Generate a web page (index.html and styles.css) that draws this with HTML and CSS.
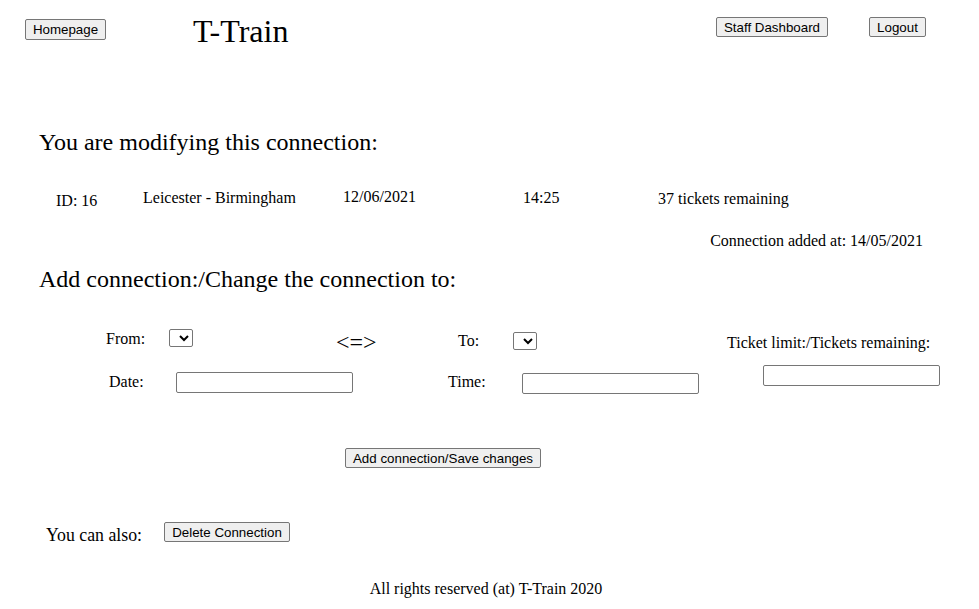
FILE: index.html
```html
<!DOCTYPE html>
<html>
<head>
<meta charset="utf-8">
<title>T-Train</title>
<link rel="stylesheet" href="styles.css">
</head>
<body>
<div class="page">
  <header class="header">
    <button class="btn btn-home">Homepage</button>
    <h1 class="title">T-Train</h1>
    <div class="spacer"></div>
    <button class="btn btn-staff">Staff Dashboard</button>
    <button class="btn btn-logout">Logout</button>
  </header>

  <h2 class="heading heading-first">You are modifying this connection:</h2>

  <div class="conn-row">
    <div class="cell c-id">ID: 16</div>
    <div class="cell c-route">Leicester - Birmingham</div>
    <div class="cell c-date">12/06/2021</div>
    <div class="cell c-time">14:25</div>
    <div class="cell c-tickets">37 tickets remaining</div>
  </div>

  <div class="added">Connection added at: 14/05/2021</div>

  <h2 class="heading heading-second">Add connection:/Change the connection to:</h2>

  <div class="form-row row-one">
    <div class="f f-from">From:</div>
    <div class="f f-fromsel"><select class="sel"></select></div>
    <div class="f f-arrow">&lt;=&gt;</div>
    <div class="f f-to">To:</div>
    <div class="f f-tosel"><select class="sel"></select></div>
    <div class="f f-limit">Ticket limit:/Tickets remaining:</div>
  </div>

  <div class="form-row row-two">
    <div class="f f-datel">Date:</div>
    <div class="f f-datei"><input class="inp" type="text"></div>
    <div class="f f-timel">Time:</div>
    <div class="f f-timei"><input class="inp" type="text"></div>
    <div class="f f-limiti"><input class="inp" type="text"></div>
  </div>

  <div class="save-row">
    <button class="btn btn-save">Add connection/Save changes</button>
  </div>

  <div class="also-row">
    <span class="also">You can also:</span>
    <button class="btn btn-delete">Delete Connection</button>
  </div>

  <footer class="footer">All rights reserved (at) T-Train 2020</footer>
</div>
</body>
</html>
```

FILE: styles.css
```css
html, body {
  margin: 0;
  padding: 0;
  background: #ffffff;
}

body {
  font-family: "Liberation Serif", "Times New Roman", serif;
  font-size: 16px;
  color: #000000;
  width: 979px;
  height: 609px;
  overflow: hidden;
}

.page {
  display: flex;
  flex-direction: column;
}

.btn {
  font-family: "Liberation Sans", Arial, sans-serif;
  font-size: 13.33px;
  line-height: 17px;
  height: 20px;
  padding: 1px 6px;
  margin: 0;
  border: 1px solid #767676;
  border-radius: 2px;
  background: #efefef;
  color: #000000;
  box-sizing: border-box;
}

.header {
  display: flex;
  align-items: flex-start;
  height: 60px;
}

.btn-home {
  margin: 19px 0 0 25px;
  width: 81px;
  height: 21px;
}

.title {
  margin: 13px 0 0 87px;
  font-size: 32px;
  line-height: 37px;
  font-weight: normal;
}

.spacer {
  flex: 1;
}

.btn-staff {
  margin-top: 17px;
  width: 112px;
}

.btn-logout {
  margin: 17px 53px 0 41px;
  width: 57px;
}

.heading {
  margin: 0;
  padding-left: 39px;
  font-size: 24px;
  line-height: 28px;
  font-weight: normal;
}

.heading-first {
  margin-top: 68px;
}

.conn-row {
  display: flex;
  align-items: flex-start;
  margin-top: 32px;
  padding-left: 56px;
  height: 20px;
}

.cell {
  line-height: 18px;
  white-space: nowrap;
}

.c-id {
  width: 87px;
  margin-top: 4px;
}

.c-route {
  width: 200px;
  margin-top: 1px;
}

.c-date {
  width: 180px;
  margin-top: 0;
}

.c-time {
  width: 135px;
  margin-top: 1px;
}

.c-tickets {
  margin-top: 2px;
}

.added {
  margin-top: 24px;
  text-align: right;
  padding-right: 56px;
  line-height: 18px;
}

.heading-second {
  margin-top: 15px;
}

.form-row {
  display: flex;
  align-items: flex-start;
  white-space: nowrap;
}

.row-one {
  margin-top: 36px;
  padding-left: 106px;
  height: 28px;
}

.f {
  line-height: 18px;
}

.f-from {
  width: 63px;
  margin-top: 1px;
}

.f-fromsel {
  width: 167px;
}

.sel {
  width: 24px;
  height: 18px;
  margin: 0;
  padding: 0;
  border: 1px solid #767676;
  border-radius: 2px;
  background: #ffffff;
  box-sizing: border-box;
  display: block;
}

.f-arrow {
  width: 122px;
  font-size: 24px;
  line-height: 24px;
  margin-top: 1px;
}

.f-to {
  width: 55px;
  margin-top: 3px;
}

.f-tosel {
  width: 214px;
  margin-top: 3px;
}

.f-limit {
  margin-top: 5px;
}

.row-two {
  margin-top: 8px;
  padding-left: 109px;
  height: 30px;
}

.inp {
  width: 177px;
  height: 21px;
  margin: 0;
  padding: 1px 2px;
  border: 1px solid #767676;
  border-radius: 2px;
  box-sizing: border-box;
  display: block;
  font-family: "Liberation Sans", Arial, sans-serif;
  font-size: 13px;
}

.f-datel {
  width: 67px;
  margin-top: 8px;
}

.f-datei {
  width: 272px;
  margin-top: 7px;
}

.f-timel {
  width: 74px;
  margin-top: 8px;
}

.f-timei {
  width: 241px;
  margin-top: 8px;
}

.f-limiti {
  margin-top: 0;
}

.save-row {
  margin-top: 53px;
  padding-left: 345px;
  display: flex;
}

.btn-save {
  width: 196px;
}

.also-row {
  margin-top: 54px;
  display: flex;
  align-items: flex-start;
  padding-left: 46px;
}

.also {
  font-size: 17.8px;
  line-height: 20px;
  margin-top: 3px;
  width: 118px;
}

.btn-delete {
  width: 126px;
}

.footer {
  margin-top: 35px;
  text-align: center;
  padding-right: 7px;
  line-height: 18px;
}
```
